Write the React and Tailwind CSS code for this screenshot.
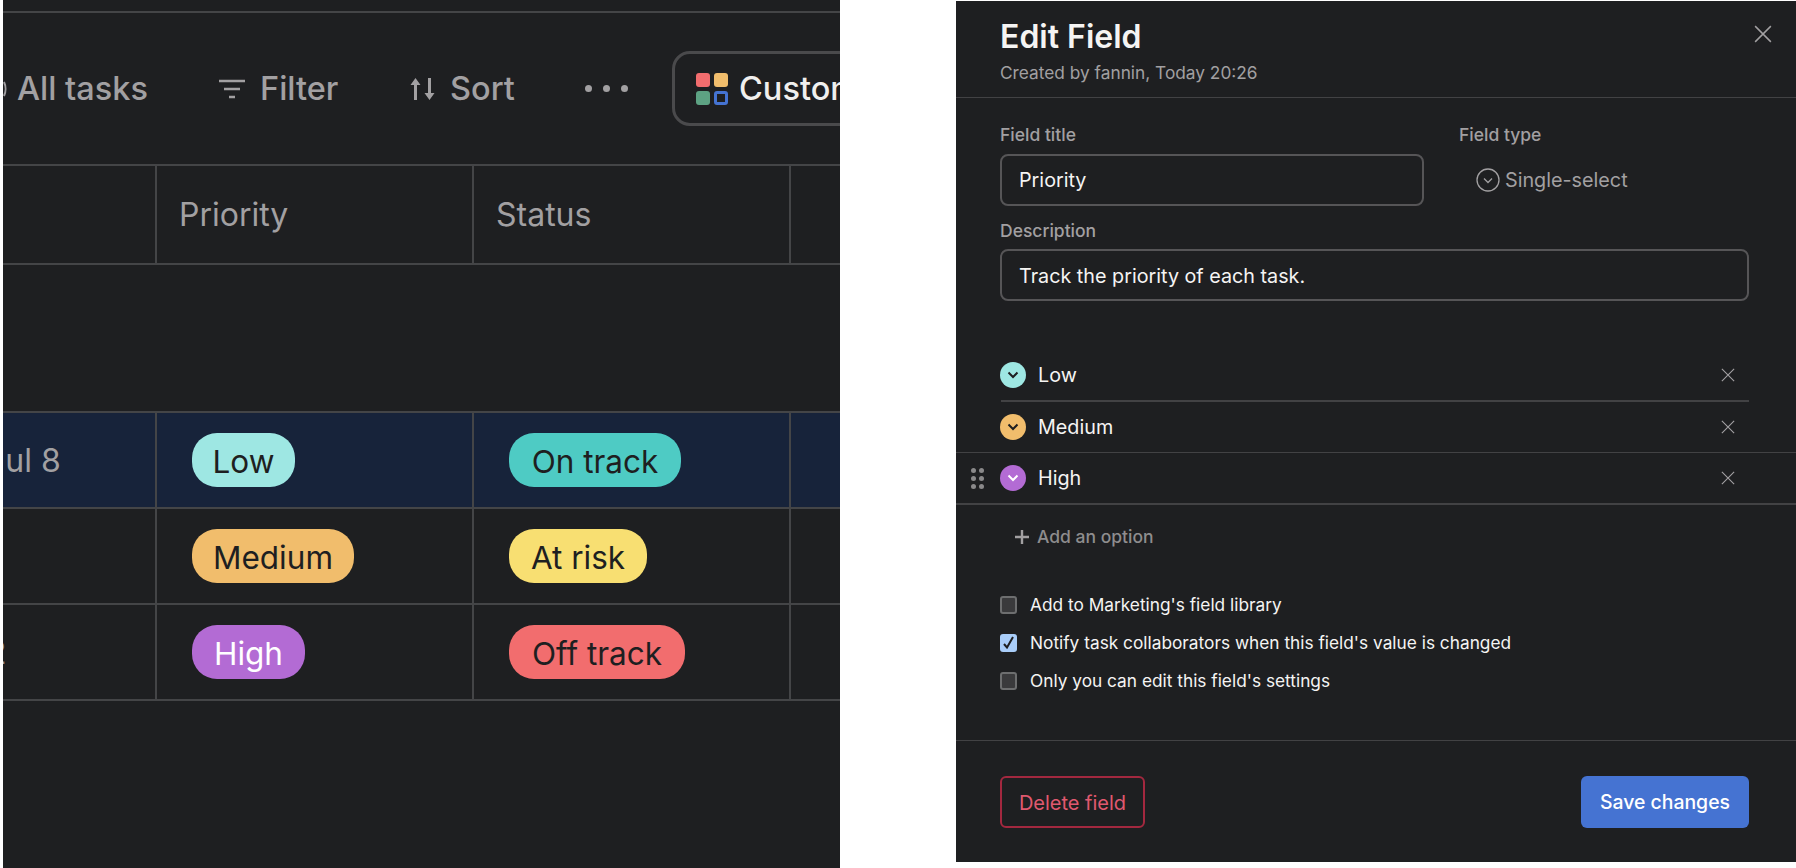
import React from 'react';

const rows = [
  { date: 'Jul 8', dateMargin: '-ml-[16px]', priority: 'Low', priorityBg: 'bg-[#9ee7e3]', priorityW: 'w-[103px]', status: 'On track', statusBg: 'bg-[#4ecbc4]', statusW: 'w-[172px]', bg: 'bg-[#17233a]' },
  { date: '', priority: 'Medium', priorityBg: 'bg-[#f1bd6c]', priorityW: 'w-[162px]', status: 'At risk', statusBg: 'bg-[#f8df72]', statusW: 'w-[138px]', bg: '' },
  { date: 'Jul 12', dateMargin: '-ml-[83px]', priority: 'High', priorityBg: 'bg-[#b36bd4]', priorityW: 'w-[113px]', priorityText: 'text-white', status: 'Off track', statusBg: 'bg-[#f26d6e]', statusW: 'w-[176px]', bg: '' },
];

const options = [
  { name: 'Low', color: 'bg-[#9ee7e3]', chevron: '#1e1f21', divider: 'ml-[45px] mr-[47px]' },
  { name: 'Medium', color: 'bg-[#f1bd6c]', chevron: '#1e1f21', divider: '' },
  { name: 'High', color: 'bg-[#b36bd4]', chevron: '#ffffff', divider: '', drag: true },
];

const checks = [
  { label: "Add to Marketing's field library", checked: false },
  { label: "Notify task collaborators when this field's value is changed", checked: true },
  { label: "Only you can edit this field's settings", checked: false },
];

const CloseIcon = ({ size, color }) => (
  <svg width={size} height={size} viewBox="0 0 16 16" fill="none" stroke={color} strokeWidth="1.3">
    <path d="M1 1l14 14M15 1L1 15" />
  </svg>
);

const Pill = ({ label, bg, width, text = 'text-[#1e1f21]' }) => (
  <div className={`flex h-[54px] items-center justify-center rounded-[25px] pt-[3px] text-[31.5px] ${bg} ${width} ${text}`}>
    {label}
  </div>
);

const TaskTable = () => (
  <div className="ml-[3px] h-[868px] w-[837px] shrink-0 overflow-hidden bg-[#1e1f21]">
    <div className="mt-[11px] h-[2px] bg-[#444547]" />

    {/* Toolbar */}
    <div className="flex h-[151px] items-center text-[32.500px] font-medium whitespace-nowrap text-[#a2a0a2]">
      <svg width="4" height="16" viewBox="0 0 4 16" fill="none" stroke="#a2a0a2" strokeWidth="2" className="shrink-0">
        <path d="M1 1c2 4 2 10 0 14" />
      </svg>
      <span className="ml-[10px] w-[129px] shrink-0 pt-[2px]">All tasks</span>
      <svg width="26" height="20" viewBox="0 0 26 20" fill="none" stroke="#a2a0a2" strokeWidth="2.4" className="ml-[73px] shrink-0">
        <path d="M0 2h26M5 10h16M10 18h6" />
      </svg>
      <span className="ml-[15px] w-[78px] shrink-0 pt-[2px]">Filter</span>
      <svg width="27" height="22" viewBox="0 0 27 22" className="ml-[71px] shrink-0" fill="#a2a0a2">
        <path d="M5 22V7H1.500l5-7 5 7H8v15zM19 0v15h-3.500l5 7 5-7H22V0z" />
      </svg>
      <span className="ml-[14px] w-[66px] shrink-0 pt-[2px]">Sort</span>
      <div className="ml-[69px] flex shrink-0 gap-[11px]">
        <div className="h-[7px] w-[7px] rounded-full bg-[#a2a0a2]" />
        <div className="h-[7px] w-[7px] rounded-full bg-[#a2a0a2]" />
        <div className="h-[7px] w-[7px] rounded-full bg-[#a2a0a2]" />
      </div>
      <div className="ml-[44px] flex h-[75px] w-[220px] shrink-0 items-center gap-[11px] rounded-[18px] border-[3px] border-[#4a4a4c] pl-[21px]">
        <div className="grid shrink-0 grid-cols-[14px_14px] gap-[4px]">
          <div className="h-[14px] rounded-[3px] bg-[#f26d6e]" />
          <div className="h-[14px] rounded-[3px] bg-[#f1bd6c]" />
          <div className="h-[14px] rounded-[3px] bg-[#5da283]" />
          <div className="h-[14px] rounded-[3px] border-[3px] border-[#4573d2]" />
        </div>
        <span className="pt-[2px] text-[#f0efee]">Custom</span>
      </div>
    </div>

    {/* Header row */}
    <div className="grid h-[101px] grid-cols-[152px_317px_317px_51px] border-y-2 border-[#444547] text-[32px] text-[#a2a0a2]">
      <div />
      <div className="flex items-center border-l-2 border-[#444547] pl-[22px]">Priority</div>
      <div className="flex items-center border-l-2 border-[#444547] pl-[22px]">Status</div>
      <div className="border-l-2 border-[#444547]" />
    </div>

    <div className="h-[146px]" />

    {/* Task rows */}
    <div className="border-t-2 border-[#444547]">
      {rows.map((row) => (
        <div key={row.priority} className={`grid h-[96px] grid-cols-[152px_317px_317px_51px] border-b-2 border-[#444547] ${row.bg}`}>
          <div className="flex items-center overflow-hidden pt-[2px] text-[32px] text-[#a2a0a2]">
            <span className={`whitespace-nowrap ${row.dateMargin || ''}`}>{row.date}</span>
          </div>
          <div className="flex items-center border-l-2 border-[#444547] pl-[35px]">
            <Pill label={row.priority} bg={row.priorityBg} width={row.priorityW} text={row.priorityText} />
          </div>
          <div className="flex items-center border-l-2 border-[#444547] pl-[35px]">
            <Pill label={row.status} bg={row.statusBg} width={row.statusW} />
          </div>
          <div className="border-l-2 border-[#444547]" />
        </div>
      ))}
    </div>
  </div>
);

const EditField = () => (
  <div className="mt-[1px] ml-[116px] flex h-[861px] w-[840px] shrink-0 flex-col bg-[#1e1f21] text-[#f5f4f3]">
    {/* Title */}
    <div className="relative h-[97px] shrink-0 border-b border-[#424244] pl-[44px]">
      <h1 className="pt-[15px] text-[32px] leading-[42px] font-semibold">Edit Field</h1>
      <p className="mt-[4px] text-[17.3px] leading-[22px] text-[#a2a0a2]">Created by fannin, Today 20:26</p>
      <div className="absolute top-[24px] right-[24px]">
        <CloseIcon size={18} color="#a2a0a2" />
      </div>
    </div>

    {/* Title, type and description */}
    <div className="shrink-0 pt-[26px] pr-[47px] pl-[44px]">
      <div className="flex">
        <div className="w-[424px] shrink-0">
          <label className="block text-[17.500px] leading-[22px] font-medium text-[#a2a0a2]">Field title</label>
          <div className="mt-[8px] flex h-[52px] items-center rounded-[8px] border-2 border-[#565557] pt-[2px] pl-[17px] text-[19.75px]">Priority</div>
        </div>
        <div className="ml-[35px]">
          <label className="block text-[17.500px] leading-[22px] font-medium text-[#a2a0a2]">Field type</label>
          <div className="mt-[8px] flex h-[52px] items-center gap-[5px] pl-[17px] text-[19.75px] text-[#a2a0a2]">
            <svg width="24" height="24" viewBox="0 0 24 24" fill="none" stroke="#a2a0a2" strokeWidth="1.3">
              <circle cx="12" cy="12" r="11" />
              <path d="M8 10.5l4 4 4-4" />
            </svg>
            <span className="pt-[2px]">Single-select</span>
          </div>
        </div>
      </div>
      <label className="mt-[14px] block text-[17.500px] leading-[22px] font-medium text-[#a2a0a2]">Description</label>
      <div className="mt-[7px] flex h-[52px] items-center rounded-[8px] border-2 border-[#565557] pt-[3px] pl-[17px] text-[19.75px]">
        Track the priority of each task.
      </div>
    </div>

    {/* Options */}
    <div className="mt-[49px] shrink-0">
      {options.map((option) => (
        <div key={option.name}>
          <div className="relative flex h-[50px] items-center pr-[61px] pl-[44px]">
            {option.drag && (
              <div className="absolute top-[15px] left-[15px] grid grid-cols-[5px_5px] gap-x-[3px] gap-y-[3px]">
                {[0, 1, 2, 3, 4, 5].map((dot) => (
                  <div key={dot} className="h-[5px] rounded-full bg-[#8a898a]" />
                ))}
              </div>
            )}
            <div className={`flex h-[26px] w-[26px] shrink-0 items-center justify-center rounded-full ${option.color}`}>
              <svg width="12" height="8" viewBox="0 0 12 8" fill="none" stroke={option.chevron} strokeWidth="2">
                <path d="M1.5 1.5L6 6l4.500-4.500" />
              </svg>
            </div>
            <span className="ml-[12px] flex-1 pt-[2px] text-[19.75px]">{option.name}</span>
            <CloseIcon size={14} color="#a2a0a2" />
          </div>
          <div className={`h-[1.5px] bg-[#424244] ${option.divider}`} />
        </div>
      ))}
    </div>

    <div className="mt-[21px] ml-[59px] flex shrink-0 items-center gap-[8px] text-[17.500px] leading-[22px] font-medium text-[#8e8d8e]">
      <svg width="14" height="14" viewBox="0 0 14 14" fill="none" stroke="#a2a0a2" strokeWidth="2.4">
        <path d="M7 0v14M0 7h14" />
      </svg>
      Add an option
    </div>

    {/* Settings */}
    <div className="mt-[46px] flex shrink-0 flex-col gap-[16px] pl-[44px]">
      {checks.map((check) => (
        <div key={check.label} className="flex h-[22px] items-center gap-[13px] text-[17.3px]">
          {check.checked ? (
            <div className="flex h-[18px] w-[17px] items-center justify-center rounded-[3px] bg-[#a9cdf9]">
              <svg width="11" height="13" viewBox="0 0 11 13" fill="none" stroke="#1e1f21" strokeWidth="2">
                <path d="M1 8l3 3.500L10 1" />
              </svg>
            </div>
          ) : (
            <div className="h-[18px] w-[17px] rounded-[3px] border-2 border-[#6d6e6f] bg-[#3a3a3c]" />
          )}
          {check.label}
        </div>
      ))}
    </div>

    {/* Footer */}
    <div className="mt-[48px] flex h-[122px] shrink-0 items-center justify-between border-t border-[#424244] pr-[47px] pl-[44px]">
      <button className="mt-[1px] h-[52px] w-[145px] rounded-[6px] border-2 border-[#a3283f] pt-[2px] text-[20px] text-[#e0596f]">Delete field</button>
      <button className="mt-[1px] h-[52px] w-[168px] rounded-[6px] bg-[#4573d2] pt-[2px] text-[19.4px] font-medium text-white">Save changes</button>
    </div>
  </div>
);

export default function App() {
  return (
    <div className="flex h-[868px] w-[1796px] items-start overflow-hidden bg-white font-['Inter',sans-serif]">
      <TaskTable />
      <EditField />
    </div>
  );
}
